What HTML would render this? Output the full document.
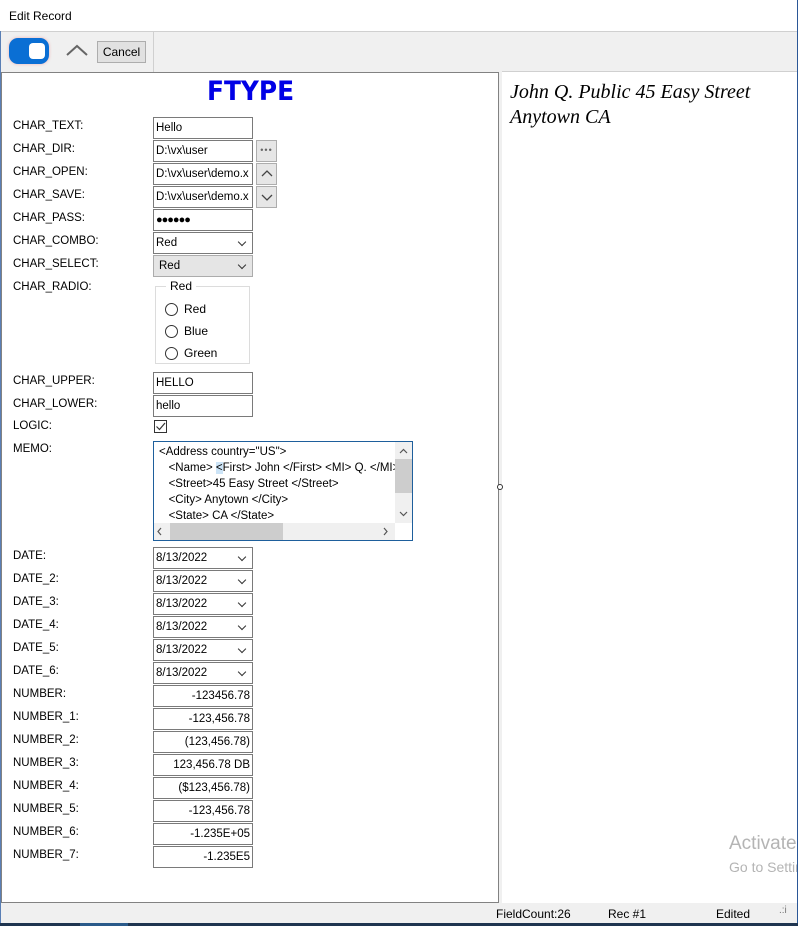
<!DOCTYPE html>
<html><head><meta charset="utf-8"><style>
*{box-sizing:border-box;margin:0;padding:0}
body{width:798px;height:926px;position:relative;background:#f0f0f0;font-family:"Liberation Sans",sans-serif;font-size:12px;color:#000;overflow:hidden}
.a{position:absolute}
.lbl{position:absolute;left:13px;font-size:11.5px;line-height:16px;margin-top:-1px}
.in{position:absolute;left:153px;width:100px;height:22px;border:1px solid #7a7a7a;background:#fff;padding:3px 2px;line-height:14px;white-space:nowrap;overflow:hidden;font-size:11.5px}
.num{text-align:right;padding-right:2px}
.dd::after{content:"";position:absolute;right:7px;top:6px;width:5px;height:5px;border-right:1.3px solid #333;border-bottom:1.3px solid #333;transform:rotate(45deg)}
.sb{position:absolute;left:256px;width:21px;height:22px;background:#e6e6e6;border:1px solid #adadad}
</style></head><body>
<div class="a" style="left:0;top:0;width:798px;height:31px;background:#fff"></div>
<div class="a" style="left:9px;top:9px;font-size:12px">Edit Record</div>
<div class="a" style="left:0;top:31px;width:798px;height:1px;background:#d0d0d0"></div>
<div class="a" style="left:153px;top:32px;width:1px;height:40px;background:#d0d0d0"></div>
<div class="a" style="left:9px;top:38px;width:40px;height:26px;border-radius:9px;background:#0a6fd4;box-shadow:0 0 3px #f0b0b0"></div>
<div class="a" style="left:29px;top:43px;width:16px;height:16px;border-radius:4px;background:#fff"></div>
<svg class="a" style="left:65px;top:42px" width="24" height="16"><path d="M2 13 L12 4 L22 13" stroke="#666" stroke-width="2" fill="none"/></svg>
<div class="a" style="left:97px;top:41px;width:49px;height:22px;background:#e1e1e1;border:1px solid #adadad;text-align:center;line-height:20px">Cancel</div>

<div class="a" style="left:1px;top:72px;width:498px;height:831px;background:#fff;border:1px solid #828282"></div>
<div class="a" style="left:502px;top:71px;width:295px;height:832px;background:#fff;border-top:1px solid #d0d0d0"></div>
<div class="a" style="left:497px;top:484px;width:6px;height:6px;border:1px solid #333;border-radius:50%;background:#fff"></div>
<div class="a" style="left:0;top:31px;width:1px;height:895px;background:#5a7fb5"></div>

<div class="a" style="left:510px;top:80px;font-family:'Liberation Serif',serif;font-style:italic;font-size:20px;line-height:25px">John Q. Public 45 Easy Street<br>Anytown CA</div>
<div class="a" style="left:207px;top:76px;font-size:27px;font-weight:bold;color:#0000e6;font-family:'DejaVu Sans',sans-serif;transform:scaleX(0.92);transform-origin:left">FTYPE</div>

<div class="lbl" style="top:119px">CHAR_TEXT:</div><div class="in" style="top:117px">Hello</div>
<div class="lbl" style="top:142px">CHAR_DIR:</div><div class="in" style="top:140px">D:\vx\user</div>
<div class="sb" style="top:140px;text-align:center;line-height:18px;color:#666;font-size:9px;letter-spacing:1px">•••</div>
<div class="lbl" style="top:165px">CHAR_OPEN:</div><div class="in" style="top:163px">D:\vx\user\demo.x</div>
<div class="sb" style="top:163px"><svg width="19" height="20"><path d="M5 12 L10 7 L15 12" stroke="#444" stroke-width="1.3" fill="none"/></svg></div>
<div class="lbl" style="top:188px">CHAR_SAVE:</div><div class="in" style="top:186px">D:\vx\user\demo.x</div>
<div class="sb" style="top:186px"><svg width="19" height="20"><path d="M5 8 L10 13 L15 8" stroke="#444" stroke-width="1.3" fill="none"/></svg></div>
<div class="lbl" style="top:211px">CHAR_PASS:</div><div class="in" style="top:209px;font-size:11px;letter-spacing:-1px">●●●●●●</div>
<div class="lbl" style="top:234px">CHAR_COMBO:</div><div class="in dd" style="top:232px">Red</div>
<div class="lbl" style="top:257px">CHAR_SELECT:</div><div class="in dd" style="top:255px;background:#e5e5e5;border-color:#acacac;padding-left:5px">Red</div>
<div class="lbl" style="top:280px">CHAR_RADIO:</div>
<div class="a" style="left:155px;top:286px;width:95px;height:78px;border:1px solid #dcdcdc"></div>
<div class="a" style="left:166px;top:279px;background:#fff;padding:0 4px">Red</div>
<div class="a" style="left:165px;top:303px;width:13px;height:13px;border:1px solid #333;border-radius:50%"></div><div class="a" style="left:184px;top:302px">Red</div>
<div class="a" style="left:165px;top:325px;width:13px;height:13px;border:1px solid #333;border-radius:50%"></div><div class="a" style="left:184px;top:324px">Blue</div>
<div class="a" style="left:165px;top:347px;width:13px;height:13px;border:1px solid #333;border-radius:50%"></div><div class="a" style="left:184px;top:346px">Green</div>
<div class="lbl" style="top:374px">CHAR_UPPER:</div><div class="in" style="top:372px">HELLO</div>
<div class="lbl" style="top:397px">CHAR_LOWER:</div><div class="in" style="top:395px">hello</div>
<div class="lbl" style="top:419px">LOGIC:</div>
<div class="a" style="left:154px;top:420px;width:13px;height:13px;border:1px solid #333"><svg width="11" height="11" style="position:absolute;left:0;top:0"><path d="M1.5 5.5 L4.5 8.5 L10 2" stroke="#333" stroke-width="1.2" fill="none"/></svg></div>
<div class="lbl" style="top:442px">MEMO:</div>
<div class="a" style="left:153px;top:441px;width:260px;height:100px;border:1px solid #1e5f9c;background:#fff"></div>
<div class="a" style="left:159px;top:444px;width:236px;overflow:hidden;white-space:nowrap;line-height:16px;font-size:11.5px">&lt;Address country="US"&gt;<br>&nbsp;&nbsp;&nbsp;&lt;Name&gt; <span style="background:#cce4f7">&lt;</span>First&gt; John &lt;/First&gt; &lt;MI&gt; Q. &lt;/MI&gt;<br>&nbsp;&nbsp;&nbsp;&lt;Street&gt;45 Easy Street &lt;/Street&gt;<br>&nbsp;&nbsp;&nbsp;&lt;City&gt; Anytown &lt;/City&gt;<br>&nbsp;&nbsp;&nbsp;&lt;State&gt; CA &lt;/State&gt;</div>
<div class="a" style="left:395px;top:442px;width:17px;height:81px;background:#f0f0f0"></div>
<div class="a" style="left:395px;top:459px;width:17px;height:34px;background:#cdcdcd"></div>
<div class="a" style="left:154px;top:523px;width:241px;height:17px;background:#f0f0f0"></div>
<div class="a" style="left:170px;top:523px;width:113px;height:17px;background:#cdcdcd"></div>
<svg class="a" style="left:395px;top:442px" width="17" height="81"><path d="M5 11 L8.5 7.5 L12 11" stroke="#555" stroke-width="1.2" fill="none"/><path d="M5 70 L8.5 73.5 L12 70" stroke="#555" stroke-width="1.2" fill="none"/></svg>
<svg class="a" style="left:154px;top:523px" width="241" height="17"><path d="M7 5 L4 8.5 L7 12" stroke="#555" stroke-width="1.2" fill="none"/><path d="M230 5 L233 8.5 L230 12" stroke="#555" stroke-width="1.2" fill="none"/></svg>

<div class="lbl" style="top:549px">DATE:</div><div class="in dd" style="top:547px">8/13/2022</div>
<div class="lbl" style="top:572px">DATE_2:</div><div class="in dd" style="top:570px">8/13/2022</div>
<div class="lbl" style="top:595px">DATE_3:</div><div class="in dd" style="top:593px">8/13/2022</div>
<div class="lbl" style="top:618px">DATE_4:</div><div class="in dd" style="top:616px">8/13/2022</div>
<div class="lbl" style="top:641px">DATE_5:</div><div class="in dd" style="top:639px">8/13/2022</div>
<div class="lbl" style="top:664px">DATE_6:</div><div class="in dd" style="top:662px">8/13/2022</div>
<div class="lbl" style="top:687px">NUMBER:</div><div class="in num" style="top:685px">-123456.78</div>
<div class="lbl" style="top:710px">NUMBER_1:</div><div class="in num" style="top:708px">-123,456.78</div>
<div class="lbl" style="top:733px">NUMBER_2:</div><div class="in num" style="top:731px">(123,456.78)</div>
<div class="lbl" style="top:756px">NUMBER_3:</div><div class="in num" style="top:754px">123,456.78 DB</div>
<div class="lbl" style="top:779px">NUMBER_4:</div><div class="in num" style="top:777px">($123,456.78)</div>
<div class="lbl" style="top:802px">NUMBER_5:</div><div class="in num" style="top:800px">-123,456.78</div>
<div class="lbl" style="top:825px">NUMBER_6:</div><div class="in num" style="top:823px">-1.235E+05</div>
<div class="lbl" style="top:848px">NUMBER_7:</div><div class="in num" style="top:846px">-1.235E5</div>

<div class="a" style="left:729px;top:833px;font-size:19px;color:#b4b4b4;white-space:nowrap">Activate</div>
<div class="a" style="left:729px;top:859px;font-size:14px;color:#b4b4b4;white-space:nowrap">Go to Settings</div>
<div class="a" style="left:797px;top:0;width:1px;height:926px;background:#2b5797"></div>

<div class="a" style="left:496px;top:907px">FieldCount:26</div>
<div class="a" style="left:608px;top:907px">Rec #1</div>
<div class="a" style="left:716px;top:907px">Edited</div>
<div class="a" style="left:779px;top:905px;color:#777;font-size:10px">.:i</div>
<div class="a" style="left:0;top:923px;width:798px;height:3px;background:#1f3550"></div>
<div class="a" style="left:80px;top:923px;width:48px;height:3px;background:#2a5a8a"></div>
</body></html>
